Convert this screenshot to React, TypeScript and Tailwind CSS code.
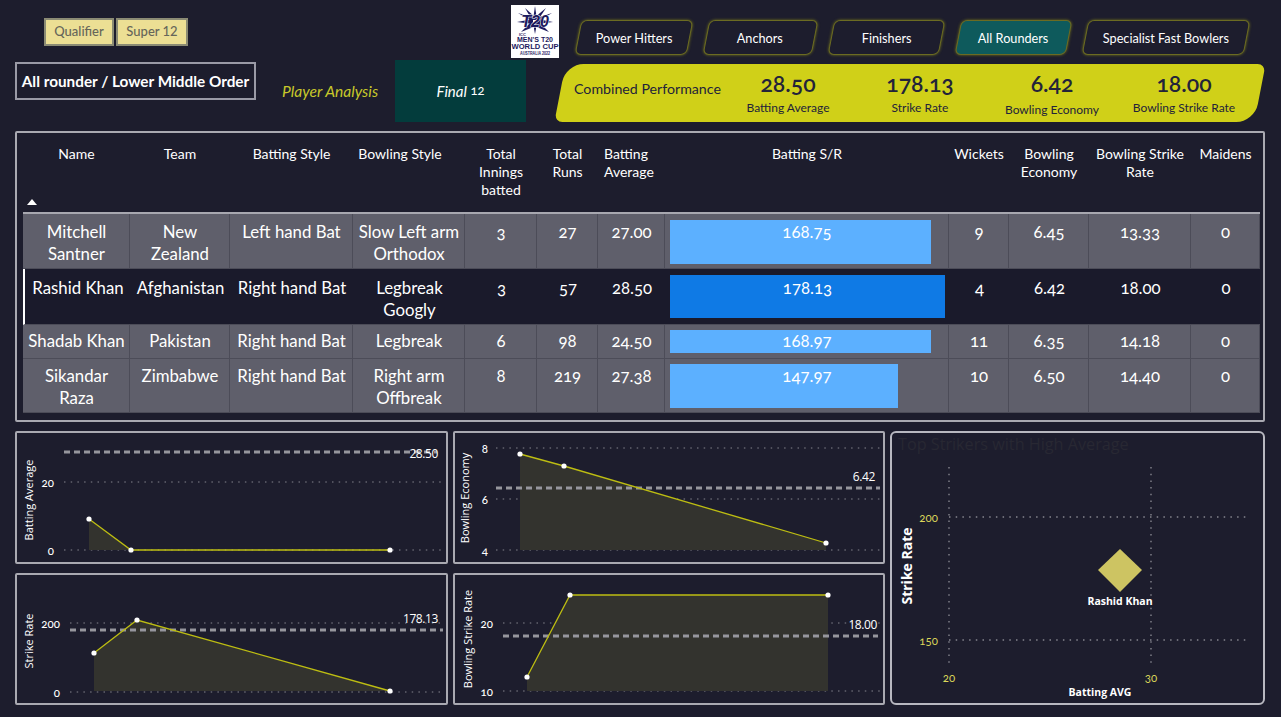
import React from 'react';

const players = [
  { name: ['Mitchell', 'Santner'], team: ['New', 'Zealand'], bat: 'Left hand Bat', bowl: ['Slow Left arm', 'Orthodox'], inn: '3', runs: '27', avg: '27.00', sr: '168.75', wk: '9', eco: '6.45', bsr: '13.33', barClass: 'top-[6px] h-[44px] w-[261px] bg-[#5cb0ff]', rowClass: 'h-[55px] pt-[7px]', selected: false },
  { name: ['Rashid Khan'], team: ['Afghanistan'], bat: 'Right hand Bat', bowl: ['Legbreak', 'Googly'], inn: '3', runs: '57', avg: '28.50', sr: '178.13', wk: '4', eco: '6.42', bsr: '18.00', barClass: 'top-[6px] h-[43px] w-[275px] bg-[#0f7ae5]', rowClass: 'h-[56px] pt-[8px]', selected: true },
  { name: ['Shadab Khan'], team: ['Pakistan'], bat: 'Right hand Bat', bowl: ['Legbreak'], inn: '6', runs: '98', avg: '24.50', sr: '168.97', wk: '11', eco: '6.35', bsr: '14.18', barClass: 'top-[5px] h-[23px] w-[261px] bg-[#5cb0ff]', rowClass: 'h-[34px] pt-[5px]', selected: false },
  { name: ['Sikandar', 'Raza'], team: ['Zimbabwe'], bat: 'Right hand Bat', bowl: ['Right arm', 'Offbreak'], inn: '8', runs: '219', avg: '27.38', sr: '147.97', wk: '10', eco: '6.50', bsr: '14.40', barClass: 'top-[5px] h-[44px] w-[228px] bg-[#5cb0ff]', rowClass: 'h-[54px] pt-[6px]', selected: false },
];

const columns = [
  { label: ['Name'], width: 'w-[107px]', shift: '' },
  { label: ['Team'], width: 'w-[100px]', shift: '' },
  { label: ['Batting Style'], width: 'w-[123px]', shift: '' },
  { label: ['Bowling Style'], width: 'w-[112px]', shift: 'pr-[18px]' },
  { label: ['Total', 'Innings', 'batted'], width: 'w-[72px]', shift: '' },
  { label: ['Total', 'Runs'], width: 'w-[61px]', shift: '' },
  { label: ['Batting', 'Average'], width: 'w-[67px]', shift: 'pl-[6px] text-left' },
  { label: ['Batting S/R'], width: 'w-[284px]', shift: '' },
  { label: ['Wickets'], width: 'w-[60px]', shift: '' },
  { label: ['Bowling', 'Economy'], width: 'w-[80px]', shift: '' },
  { label: ['Bowling Strike', 'Rate'], width: 'w-[102px]', shift: '' },
  { label: ['Maidens'], width: 'w-[69px]', shift: '' },
];

const tabs = [
  { label: 'Power Hitters', width: 'w-[112px]', active: false },
  { label: 'Anchors', width: 'w-[109px]', active: false },
  { label: 'Finishers', width: 'w-[111px]', active: false },
  { label: 'All Rounders', width: 'w-[111px]', active: true },
  { label: 'Specialist Fast Bowlers', width: 'w-[162px]', active: false },
];

const stats = [
  { value: '28.50', label: 'Batting Average', labelClass: 'mt-[5px]' },
  { value: '178.13', label: 'Strike Rate', labelClass: 'mt-[5px]' },
  { value: '6.42', label: 'Bowling Economy', labelClass: 'mt-[7px]' },
  { value: '18.00', label: 'Bowling Strike Rate', labelClass: 'mt-[5px]' },
];

interface Tick { label: string; y: number }
interface LineChartProps {
  box: [number, number, number, number];
  title: string;
  titleX: number;
  titleY: number;
  tickX: number;
  gridX: [number, number];
  ticks: Tick[];
  refY: number;
  refEnd: number;
  refLabel: string;
  refLabelX: number;
  refLabelY: number;
  points: [number, number][];
  base: number;
}

// all coordinates are page pixels, the viewBox maps them into the panel
const LineChart: React.FC<LineChartProps> = ({ box, title, titleX, titleY, tickX, gridX, ticks, refY, refEnd, refLabel, refLabelX, refLabelY, points, base }) => {
  const line = points.map((p) => p.join(',')).join(' ');
  const area = `${points[0][0]},${base} ${line} ${points[points.length - 1][0]},${base}`;
  return (
    <div className="rounded-[2px] border-2 border-[#a9a9b1] min-h-0">
      <svg viewBox={box.join(' ')} className="block w-full h-full font-['Open_Sans',sans-serif]">
        <text x={titleX} y={titleY} transform={`rotate(-90 ${titleX} ${titleY})`} textAnchor="middle" dominantBaseline="central" fill="#ffffff" fontSize="11">{title}</text>
        {ticks.map((t) => (
          <g key={t.label}>
            <line x1={gridX[0]} x2={gridX[1]} y1={t.y} y2={t.y} stroke="#85858e" strokeWidth="1" strokeDasharray="1.5 5.2" />
            <text x={tickX} y={t.y} textAnchor="end" dominantBaseline="central" fill="#ffffff" fontSize="11.5" fontWeight="500" className="font-['Lato',sans-serif] oldstyle-nums">{t.label}</text>
          </g>
        ))}
        <polygon points={area} fill="#33332e" />
        <line x1={gridX[0]} x2={refEnd} y1={refY} y2={refY} stroke="#96969d" strokeWidth="3" strokeDasharray="6 4" />
        <polyline points={line} fill="none" stroke="#bdbd12" strokeWidth="1.3" />
        {points.map((p) => (
          <circle key={p.join('-')} cx={p[0]} cy={p[1]} r="2.6" fill="#ffffff" />
        ))}
        <text x={refLabelX} y={refLabelY} textAnchor="end" dominantBaseline="central" fill="#ffffff" fontSize="12" letterSpacing="-0.4">{refLabel}</text>
      </svg>
    </div>
  );
};

const ScatterChart: React.FC = () => (
  <div className="row-span-2 rounded-[6px] border-2 border-[#b8b8c0]">
    <svg viewBox="892 433 371 270" className="block w-full h-full font-['Open_Sans',sans-serif]">
      <text x="898" y="444" dominantBaseline="central" fill="#282833" fontSize="16.2">Top Strikers with High Average</text>
      <line x1="949" x2="949" y1="467" y2="665" stroke="#85858e" strokeWidth="1.4" strokeDasharray="1.5 5.2" />
      <line x1="1151" x2="1151" y1="467" y2="665" stroke="#85858e" strokeWidth="1.4" strokeDasharray="1.5 5.2" />
      <line x1="949" x2="1250" y1="517" y2="517" stroke="#85858e" strokeWidth="1.4" strokeDasharray="1.5 5.2" />
      <line x1="949" x2="1250" y1="640" y2="640" stroke="#85858e" strokeWidth="1.4" strokeDasharray="1.5 5.2" />
      <g fill="#dcd75a" fontSize="11.5" dominantBaseline="central" className="font-['Lato',sans-serif] oldstyle-nums">
        <text x="938" y="517" textAnchor="end">200</text>
        <text x="938" y="640" textAnchor="end">150</text>
        <text x="949" y="677" textAnchor="middle">20</text>
        <text x="1151" y="677" textAnchor="middle">30</text>
      </g>
      <text x="906" y="566" transform="rotate(-90 906 566)" textAnchor="middle" dominantBaseline="central" fill="#ffffff" fontSize="14" fontWeight="700">Strike Rate</text>
      <text x="1100" y="692" textAnchor="middle" dominantBaseline="central" fill="#ffffff" fontSize="10.5" fontWeight="700">Batting AVG</text>
      <polygon points="1120,549 1142,570 1120,592 1098,570" fill="#cdc462" />
      <text x="1120" y="601" textAnchor="middle" dominantBaseline="central" fill="#ffffff" fontSize="10.5" fontWeight="700">Rashid Khan</text>
    </svg>
  </div>
);

const Logo: React.FC = () => (
  <svg viewBox="0 0 48 53" className="block w-[48px] h-[53px] shrink-0 bg-white font-['Liberation_Sans',sans-serif]">
    <g fill="#1d1a5e">
      <polygon points="22,15 24,1 26,15" />
      <polygon points="21,15 14,3 25,13" />
      <polygon points="27,15 35,3 23,13" />
      <polygon points="22,13 7,8 22,17" />
      <polygon points="26,13 41,8 26,17" />
      <polygon points="22,14 6,17 22,19" />
      <polygon points="26,14 42,17 26,19" />
      <polygon points="20,17 10,27 25,21" />
      <polygon points="28,17 38,27 23,21" />
      <polygon points="22,18 24,29 26,18" />
    </g>
    <text x="24" y="22" textAnchor="middle" fill="#1d1a5e" stroke="#ffffff" strokeWidth="1" paintOrder="stroke" fontSize="16" fontWeight="700" fontStyle="italic">T20</text>
    <text x="8" y="31" fill="#1d1a5e" fontSize="4" fontWeight="700">ICC</text>
    <text x="24" y="37" textAnchor="middle" fill="#1d1a5e" fontSize="7" fontWeight="700" textLength="36" lengthAdjust="spacingAndGlyphs">MEN'S T20</text>
    <text x="24" y="44" textAnchor="middle" fill="#1d1a5e" fontSize="7.5" fontWeight="700" textLength="47" lengthAdjust="spacingAndGlyphs">WORLD CUP</text>
    <text x="24" y="50" textAnchor="middle" fill="#1d1a5e" fontSize="4.5" fontWeight="700" textLength="30" lengthAdjust="spacingAndGlyphs">AUSTRALIA 2022</text>
  </svg>
);

const Header: React.FC = () => (
  <header className="flex h-[131px] shrink-0 pl-[15px]">
    <div className="flex flex-col w-[241px]">
      <div className="flex gap-[2px] mt-[18px] ml-[29px] text-[13px] font-medium text-[#66665a]">
        <div className="flex items-center justify-center w-[70px] h-[28px] bg-[#ecdf94] border-2 border-[#8b8b74]">Qualifier</div>
        <div className="flex items-center justify-center w-[72px] h-[28px] bg-[#ecdf94] border-2 border-[#8b8b74]">Super 12</div>
      </div>
      <div className="flex items-center justify-center h-[38px] mt-[16px] border-2 border-[#9a9aa6] text-[15.3px] font-bold text-white whitespace-nowrap">All rounder / Lower Middle Order</div>
    </div>
    <div className="flex flex-col ml-[26px] flex-1">
      <div className="flex h-[60px] pl-[229px]">
        <div className="mt-[5px]"><Logo /></div>
        <nav className="flex gap-[16px] mt-[20px] ml-[19px]">
          {tabs.map((t) => (
            <div key={t.label} className={`flex items-center justify-center h-[35px] pt-[2px] ${t.width} skew-x-[-11deg] rounded-[6px] border-[1.5px] border-[#6b6b22] shadow-[0_0_3px_#77771c] text-[12.7px] text-white ${t.active ? 'bg-[#0e5a5c]' : 'bg-[#1d1d2d]'}`}>
              <span className="skew-x-[11deg] whitespace-nowrap">{t.label}</span>
            </div>
          ))}
        </nav>
      </div>
      <div className="flex items-start">
        <div className="w-[113px] mt-[20px] text-[15.6px] italic text-[#c8c82a] whitespace-nowrap">Player Analysis</div>
        <div className="flex items-center justify-center w-[131px] h-[62px] bg-[#033c3c] text-[15px] italic text-white oldstyle-nums">Final&nbsp;<span className="not-italic text-[13px]">12</span></div>
        <div className="relative flex w-[710px] h-[58px] mt-[4px] ml-[29px] text-[#23233a] oldstyle-nums">
          <div className="absolute inset-y-0 inset-x-[5px] skew-x-[-11deg] bg-[#d0d018] rounded-tl-[18px] rounded-tr-[8px] rounded-br-[18px] rounded-bl-[8px]" />
          <div className="relative w-[167px] pl-[19px] pt-[14px] text-[14.2px] whitespace-nowrap">Combined Performance</div>
          {stats.map((s) => (
            <div key={s.label} className="relative flex flex-col items-center w-[132px] pt-[6px]">
              <div className="text-[23px] leading-[26px] font-semibold">{s.value}</div>
              <div className={`text-[12px] leading-[14px] whitespace-nowrap ${s.labelClass}`}>{s.label}</div>
            </div>
          ))}
        </div>
      </div>
    </div>
  </header>
);

const PlayerTable: React.FC = () => (
  <section className="shrink-0 h-[291px] mx-[15px] w-[1250px] pl-[6px] pt-[1px] rounded-[2px] border-2 border-[#a9a9b1]">
    <table className="table-fixed border-separate border-spacing-0 w-[1237px] text-white oldstyle-nums">
      <colgroup>
        {columns.map((c, i) => (
          <col key={i} className={c.width} />
        ))}
      </colgroup>
      <thead>
        <tr>
          {columns.map((c, i) => (
            <th key={i} className={`relative h-[80px] pt-[11px] align-top border-b-2 border-[#a8a8b0] text-[14px] leading-[18px] font-normal ${c.shift}`}>
              {c.label.map((l) => (
                <div key={l} className="whitespace-nowrap">{l}</div>
              ))}
              {i === 0 && (
                <svg viewBox="0 0 10 6" className="absolute left-[4px] bottom-[7px] w-[10px] h-[6px]">
                  <polygon points="5,0 10,6 0,6" fill="#ffffff" />
                </svg>
              )}
            </th>
          ))}
        </tr>
      </thead>
      <tbody className="text-[16.8px] leading-[22px] text-center">
        {players.map((p) => {
          const cell = `align-top pl-px ${p.rowClass} border-b border-[#4c4c58] ${p.selected ? 'bg-[#1a1a2b]' : 'bg-[#5f5f6b] border-r'}`;
          return (
            <tr key={p.sr}>
              <td className={`${cell} ${p.selected ? 'border-l-2 border-l-white' : ''}`}>{p.name.map((l) => <div key={l} className="whitespace-nowrap">{l}</div>)}</td>
              <td className={cell}>{p.team.map((l) => <div key={l} className="whitespace-nowrap">{l}</div>)}</td>
              <td className={`${cell} whitespace-nowrap`}>{p.bat}</td>
              <td className={cell}>{p.bowl.map((l) => <div key={l} className="whitespace-nowrap">{l}</div>)}</td>
              <td className={cell}>{p.inn}</td>
              <td className={cell}>{p.runs}</td>
              <td className={cell}>{p.avg}</td>
              <td className={`relative ${cell}`}>
                <div className={`absolute left-[5px] ${p.barClass}`} />
                <div className="relative">{p.sr}</div>
              </td>
              <td className={cell}>{p.wk}</td>
              <td className={cell}>{p.eco}</td>
              <td className={cell}>{p.bsr}</td>
              <td className={cell}>0</td>
            </tr>
          );
        })}
      </tbody>
    </table>
  </section>
);

const App: React.FC = () => {
  return (
    <main className="flex flex-col w-[1281px] h-[717px] overflow-hidden bg-[#1d1d2d] font-['Lato',sans-serif]">
      <Header />
      <PlayerTable />
      <section className="grid grid-cols-[433px_432px_375px] grid-rows-[133px_132px] gap-x-[5px] gap-y-[9px] mt-[9px] ml-[15px]">
        <LineChart box={[17, 433, 429, 129]} title="Batting Average" titleX={28} titleY={500} tickX={54} gridX={[64, 443]}
          ticks={[{ label: '20', y: 482 }, { label: '0', y: 550 }]} refY={452} refEnd={437} refLabel="28.50" refLabelX={438} refLabelY={453}
          points={[[89, 519], [131, 550], [390, 550]]} base={550} />
        <LineChart box={[455, 433, 428, 129]} title="Bowling Economy" titleX={464} titleY={498} tickX={488} gridX={[496, 880]}
          ticks={[{ label: '8', y: 448 }, { label: '6', y: 499 }, { label: '4', y: 550 }]} refY={488} refEnd={880} refLabel="6.42" refLabelX={875} refLabelY={476}
          points={[[520, 454], [564, 466], [826, 543]]} base={550} />
        <ScatterChart />
        <LineChart box={[17, 575, 429, 128]} title="Strike Rate" titleX={28} titleY={641} tickX={60} gridX={[70, 443]}
          ticks={[{ label: '200', y: 623 }, { label: '0', y: 692 }]} refY={630} refEnd={443} refLabel="178.13" refLabelX={438} refLabelY={618}
          points={[[94, 653], [137, 620], [390, 691]]} base={691} />
        <LineChart box={[455, 575, 428, 128]} title="Bowling Strike Rate" titleX={467} titleY={639} tickX={493} gridX={[503, 882]}
          ticks={[{ label: '20', y: 623 }, { label: '10', y: 691 }]} refY={636} refEnd={878} refLabel="18.00" refLabelX={877} refLabelY={624}
          points={[[527, 677], [570, 595], [828, 595]]} base={691} />
      </section>
    </main>
  );
};

export default App;
